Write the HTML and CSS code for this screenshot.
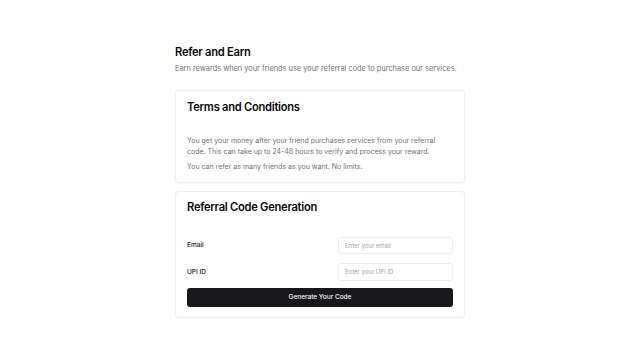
FILE: index.html
```html
<!DOCTYPE html>
<html lang="en">
<head>
<meta charset="utf-8">
<title>Refer and Earn</title>
<link rel="stylesheet" href="styles.css">
</head>
<body>
<main class="page">
  <h1 class="title">Refer and Earn</h1>
  <p class="subtitle">Earn rewards when your friends use your referral code to purchase our services.</p>
  <div class="cards">
    <section class="card">
      <div class="card-header">
        <h2 class="card-title">Terms and Conditions</h2>
      </div>
      <div class="card-content terms">
        <p>You get your money after your friend purchases services from your referral code. This can take up to 24-48 hours to verify and process your reward.</p>
        <p>You can refer as many friends as you want. No limits.</p>
      </div>
    </section>
    <section class="card">
      <div class="card-header">
        <h2 class="card-title">Referral Code Generation</h2>
      </div>
      <form class="card-content form">
        <div class="row">
          <label class="label" for="email">Email</label>
          <input class="input" id="email" type="email" placeholder="Enter your email">
        </div>
        <div class="row">
          <label class="label" for="upi">UPI ID</label>
          <input class="input" id="upi" type="text" placeholder="Enter your UPI ID">
        </div>
        <button class="button" type="button">Generate Your Code</button>
      </form>
    </section>
  </div>
</main>
</body>
</html>
```

FILE: styles.css
```css
* { box-sizing: border-box; }
html, body { margin: 0; padding: 0; background: #ffffff; }
body {
  font-family: Inter, "Noto Sans", "Liberation Sans", sans-serif;
  color: #09090b;
}
.page {
  width: 290px;
  margin: 0 auto;
  padding-top: 45px;
}
.title {
  margin: 0;
  font-size: 11.2px;
  line-height: 14px;
  font-weight: 600;
  letter-spacing: -0.025em;
}
.subtitle {
  margin: 5px 0 0;
  font-size: 7.4px;
  line-height: 10px;
  color: #71717a;
}
.cards {
  margin-top: 16px;
  display: flex;
  flex-direction: column;
  gap: 8px;
}
.card {
  border: 1px solid #efeff1;
  border-radius: 4px;
  background: #fff;
  box-shadow: 0 1px 1px rgba(0,0,0,0.03);
}
.card-header {
  padding: 10.5px 11px 0;
}
.card-title {
  margin: 0;
  font-size: 11.2px;
  line-height: 11.5px;
  font-weight: 600;
  letter-spacing: -0.025em;
}
.card-content {
  padding: 22px 11px 9.5px;
}
.terms p {
  margin: 0;
  font-size: 7px;
  line-height: 11px;
  color: #71717a;
}
.terms p + p { margin-top: 4px; }
.form {
  display: flex;
  flex-direction: column;
  gap: 9px;
  margin: 0;
  padding-top: 23px;
  padding-bottom: 10px;
}
.row {
  display: flex;
  align-items: center;
  justify-content: space-between;
}
.label {
  font-size: 6.5px;
  font-weight: 500;
  color: #18181b;
}
.input {
  width: 115px;
  height: 17.5px;
  border: 1px solid #efeff1;
  border-radius: 3px;
  padding: 0 6px;
  font-family: inherit;
  font-size: 6px;
  color: #09090b;
  background: #fff;
  outline: none;
}
.input::placeholder { color: #a1a1aa; }
.button {
  margin-top: -2px;
  height: 19.5px;
  width: 100%;
  border: 0;
  border-radius: 3px;
  background: #18181b;
  color: #fafafa;
  font-family: inherit;
  font-size: 6.5px;
  font-weight: 500;
  cursor: pointer;
}
```
